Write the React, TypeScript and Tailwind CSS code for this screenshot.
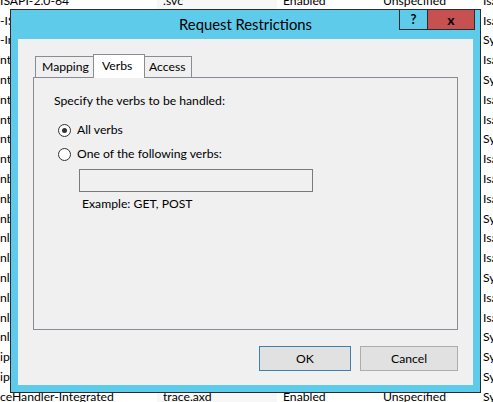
const rows: [string, string, string][] = [
  ['ISAPI-2.0-64', '.svc', 'Isa'],
  ['-ISAPI-4.0_32bit', '.svc', 'Isa'],
  ['-Integrated-4.0', '.svc', 'Sy'],
  ['ntrolHandler', '.axd', 'Isa'],
  ['ntrolHandler', '.axd', 'Sy'],
  ['ntrolHandler', '.axd', 'Isa'],
  ['ntrolHandler', '.axd', 'Isa'],
  ['ntrolHandler', '.axd', 'Sy'],
  ['ntrolHandler', '.axd', 'Isa'],
  ['nbHandler', '.rules', 'Isa'],
  ['nbHandler', '.rules', 'Isa'],
  ['nbHandler', '.rules', 'Sy'],
  ['nlHandler', '.xoml', 'Isa'],
  ['nlHandler', '.xoml', 'Isa'],
  ['nlHandler', '.xoml', 'Sy'],
  ['nlHandler', '.xoml', 'Isa'],
  ['nlHandler', '.xoml', 'Isa'],
  ['nlHandler', '.xoml', 'Sy'],
  ['iptHandler', '.asmx', 'Sy'],
  ['iptHandler', '.asmx', 'Sy'],
  ['ceHandler-Integrated', 'trace.axd', 'Sy'],
]

function HandlerList() {
  return (
    <div className="mt-[-9px] flex flex-col">
      {rows.map(([name, path, type], i) => (
        <div key={i} className="flex h-[19.8px] items-center whitespace-nowrap">
          <div className="w-[157px] shrink-0 overflow-hidden">{name}</div>
          <div className="flex h-full w-[120px] shrink-0 items-center bg-[#f7f7f7] pl-[6px]">{path}</div>
          <div className="w-[100px] shrink-0 pl-[6px]">Enabled</div>
          <div className="w-[100px] shrink-0 pl-[6px]">Unspecified</div>
          <div className="shrink-0 pl-[6px]">{type}</div>
        </div>
      ))}
    </div>
  )
}

function Radio({ checked, label }: { checked: boolean; label: string }) {
  return (
    <div className="flex h-[24px] items-center">
      <span className="ml-[4px] flex h-[13px] w-[13px] items-center justify-center rounded-full border border-[#333333] bg-white">
        {checked && <span className="h-[5px] w-[5px] rounded-full bg-[#333333]" />}
      </span>
      <span className="ml-[6px]">{label}</span>
    </div>
  )
}

function RequestRestrictionsDialog() {
  return (
    <div className="absolute left-[10px] top-[9px] flex h-[384px] w-[471px] flex-col border border-[#2b2b2b] bg-[#5fcbea]">
      <div className="relative flex h-[29px] items-center justify-center pb-[2px] text-[14.8px] text-black">
        Request Restrictions
        <div className="absolute right-[5px] top-[-1px] flex h-[21px]">
          <div className="flex w-[29px] items-center justify-center border border-[#2b2b2b] text-[13px] font-bold leading-none">
            ?
          </div>
          <div className="ml-[-1px] flex w-[48px] items-center justify-center border border-[#2b2b2b] bg-[#c75050] text-[14px] font-bold leading-none">
            x
          </div>
        </div>
      </div>

      <div className="mx-[7px] mb-[7px] flex flex-1 flex-col bg-[#f0f0f0] px-[15px] pt-[15px]">
        <div className="ml-[2px] flex h-[23px] items-end">
          <div className="flex h-[21px] w-[58px] items-center border-l border-t border-[#898c95] pl-[6px]">
            Mapping
          </div>
          <div className="relative z-10 mb-[-1px] flex h-[24px] w-[52px] items-start border border-b-0 border-[#898c95] bg-white pl-[8px] pt-[3px]">
            Verbs
          </div>
          <div className="flex h-[21px] w-[47px] items-center border-r border-t border-[#898c95] pl-[4px]">
            Access
          </div>
        </div>

        <div className="flex h-[253px] flex-col border border-[#898c95] bg-[#f0f0f0] pl-[20px] pt-[15px]">
          <div>Specify the verbs to be handled:</div>
          <div className="mt-[9px] flex flex-col">
            <Radio checked label="All verbs" />
            <Radio checked={false} label="One of the following verbs:" />
          </div>
          <div className="ml-[25px] mt-[3px] h-[23px] w-[234px] border border-[#7a7a7a] bg-[#f0f0f0]" />
          <div className="ml-[28px] mt-[4px]">Example: GET, POST</div>
        </div>

        <div className="mt-[16px] flex justify-end gap-[9px]">
          <button className="h-[25px] w-[92px] border border-[#3c7fb1] bg-[#e1e1e1] text-black">OK</button>
          <button className="h-[25px] w-[98px] border border-[#adadad] bg-[#e1e1e1] text-black">Cancel</button>
        </div>
      </div>
    </div>
  )
}

export default function App() {
  return (
    <div
      className="relative h-[402px] w-[493px] overflow-hidden bg-white text-[12.2px] leading-[16px] text-black"
      style={{ fontFamily: 'Lato, "Noto Sans", sans-serif' }}
    >
      <HandlerList />
      <RequestRestrictionsDialog />
    </div>
  )
}
